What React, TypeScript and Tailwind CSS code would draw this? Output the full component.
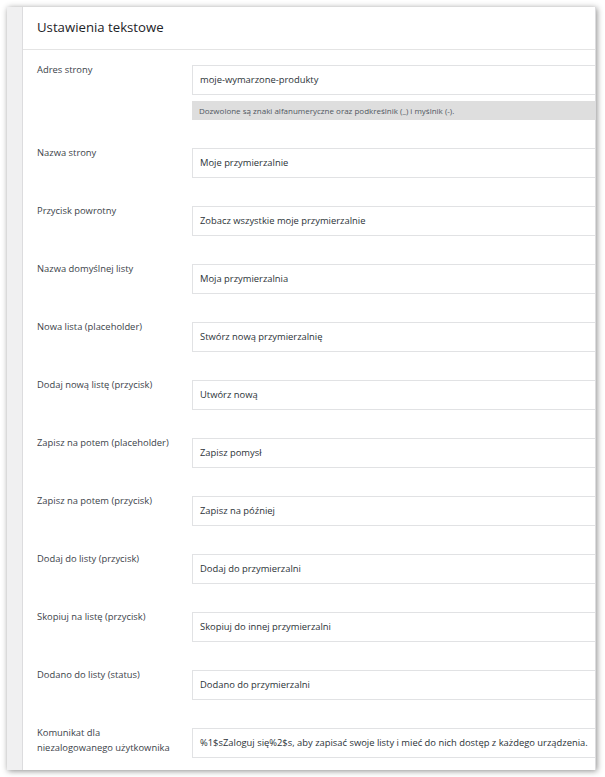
const rows: { label: string[]; value: string; help?: string }[] = [
  {
    label: ['Adres strony'],
    value: 'moje-wymarzone-produkty',
    help: 'Dozwolone są znaki alfanumeryczne oraz podkreślnik (_) i myślnik (-).',
  },
  { label: ['Nazwa strony'], value: 'Moje przymierzalnie' },
  { label: ['Przycisk powrotny'], value: 'Zobacz wszystkie moje przymierzalnie' },
  { label: ['Nazwa domyślnej listy'], value: 'Moja przymierzalnia' },
  { label: ['Nowa lista (placeholder)'], value: 'Stwórz nową przymierzalnię' },
  { label: ['Dodaj nową listę (przycisk)'], value: 'Utwórz nową' },
  { label: ['Zapisz na potem (placeholder)'], value: 'Zapisz pomysł' },
  { label: ['Zapisz na potem (przycisk)'], value: 'Zapisz na później' },
  { label: ['Dodaj do listy (przycisk)'], value: 'Dodaj do przymierzalni' },
  { label: ['Skopiuj na listę (przycisk)'], value: 'Skopiuj do innej przymierzalni' },
  { label: ['Dodano do listy (status)'], value: 'Dodano do przymierzalni' },
  {
    label: ['Komunikat dla', 'niezalogowanego użytkownika'],
    value: '%1$sZaloguj się%2$s, aby zapisać swoje listy i mieć do nich dostęp z każdego urządzenia.',
  },
];

function SettingRow({ label, value, help }: { label: string[]; value: string; help?: string }) {
  return (
    <div className="flex items-start pb-[25px]">
      <div className="w-[155px] shrink-0 text-[9.4px] leading-[15px] text-[#3c434a]">
        {label.map((l) => (
          <div key={l}>{l}</div>
        ))}
      </div>
      <div className="flex-1 mt-[3px]">
        <div className="w-[460px] h-[30px] flex items-center border border-[#e1e2e4] bg-white pl-[7px] text-[9.4px] text-[#2c3338] whitespace-nowrap">
          {value}
        </div>
        {help && (
          <div className="w-[460px] h-[19px] mt-[6px] flex items-center bg-[#dedede] pl-[7px] text-[8px] text-[#50575e] whitespace-nowrap">
            {help}
          </div>
        )}
      </div>
    </div>
  );
}

export default function App() {
  return (
    <div
      className="w-[605px] h-[777px] bg-white pt-[7px] pl-[7px] overflow-hidden"
      style={{ fontFamily: '"Open Sans", "Noto Sans", sans-serif' }}
    >
      <div className="w-[589px] h-[763px] flex overflow-hidden shadow-[1px_1px_6px_rgba(0,0,0,0.45)]">
        <div className="w-[16px] shrink-0 bg-[#f0f0f1] border-r border-[#dcdcde]" />
        <div className="flex-1 bg-white overflow-hidden border-r border-[#dcdcde]">
          <div className="h-[43px] flex items-center pl-[14px] border-b border-[#e4e4e4] text-[13.2px] text-[#1d2327]">
            Ustawienia tekstowe
          </div>
          <div className="pl-[14px] pt-[12px]">
            {rows.map((r) => (
              <SettingRow key={r.value} {...r} />
            ))}
          </div>
        </div>
      </div>
    </div>
  );
}
